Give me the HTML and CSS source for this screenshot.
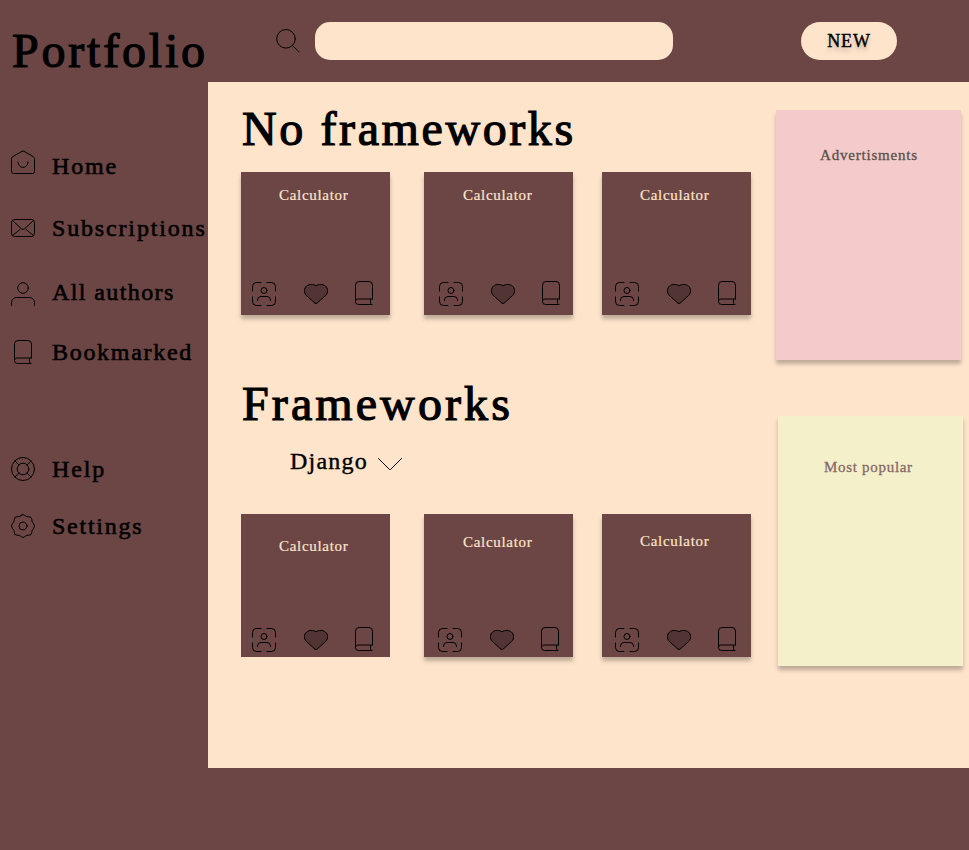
FILE: index.html
```html
<!DOCTYPE html>
<html lang="en">
<head>
<meta charset="utf-8">
<title>Portfolio</title>
<link rel="stylesheet" href="styles.css">
</head>
<body>
<svg class="defs" width="0" height="0">
  <symbol id="book" viewBox="0 0 24 24"><path d="M20.500 18V4a3.500 3.500 0 0 0-3.500-3.500h-10A3.500 3.500 0 0 0 3.500 4V20.500a3 3 0 0 0 3 3H20M3.500 20A2.200 2.200 0 0 1 5.700 18H20.500M18.500 18.500v2.500c0 1.300.5 1.800 1 2.500"/></symbol>
  <symbol id="scan" viewBox="0 0 24 24"><path d="M.5 9V4.500a4 4 0 0 1 4-4H9M15 .5h4.500a4 4 0 0 1 4 4V9M23.500 15v4.500a4 4 0 0 1-4 4H15M9 23.500H4.500a4 4 0 0 1-4-4V15M5.500 18.500V18a3.500 3.500 0 0 1 3.500-3.500h6a3.500 3.500 0 0 1 3.500 3.500v.5"/><circle cx="12" cy="8.500" r="3"/></symbol>
  <symbol id="heart" viewBox="0 0 24 24"><path class="fill" d="M10.900 22.100 2.400 14.500C-.5 11.500-.1 7.300 2.600 5 5 2.900 9.400 3 12 4.800 14.600 3 19 2.900 21.400 5c2.700 2.300 3.100 6.500.2 9.500l-8.500 7.600q-1.100.9-2.200 0z"/></symbol>
</svg>
<div class="app">
  <aside class="sidebar">
    <h1 class="title logo">Portfolio</h1>
    <nav class="nav">
      <a class="item home"><svg class="icon" viewBox="0 0 24 24"><path d="M.5 8.500a2 2 0 0 1 1-1.700L11 1.300q1-.5 2 0l9.500 5.500a2 2 0 0 1 1 1.700v13a2 2 0 0 1-2 2h-19a2 2 0 0 1-2-2zM7 12c0 7.300 10 7.300 10 0"/></svg><span>Home</span></a>
      <a class="item subs"><svg class="icon" viewBox="0 0 24 24"><rect x=".5" y="3.500" width="23" height="17" rx="3"/><path d="m1.500 4.500 9 8.300q1.500 1.300 3 0l9-8.300M1.500 19.500l7.500-6M22.500 19.500l-7.500-6"/></svg><span>Subscriptions</span></a>
      <a class="item authors"><svg class="icon" viewBox="0 0 24 24"><circle cx="12" cy="6" r="5.300"/><path d="M.5 23.500v-3a5 5 0 0 1 5-5h13a5 5 0 0 1 5 5v3"/></svg><span>All authors</span></a>
      <a class="item marks"><svg class="icon"><use href="#book"/></svg><span>Bookmarked</span></a>
      <a class="item help"><svg class="icon" viewBox="0 0 24 24"><circle cx="12" cy="12" r="11.500"/><circle cx="12" cy="12" r="5.800"/><path d="m4 4 4 4m8 8 4 4M20 4l-4 4m-8 8-4 4"/></svg><span>Help</span></a>
      <a class="item settings"><svg class="icon" viewBox="0 0 24 24"><circle cx="12" cy="12" r="4"/><path d="M10.300 1.300q1.700-1.600 3.400 0 1.700 1.900 4.200 1.500 2.900-.1 2.900 2.800-.2 2.200 1.900 4.200 1.600 2.200 0 4.400-2.100 2-1.900 4.200 0 2.900-2.900 2.800-2.500-.4-4.200 1.500-1.700 1.600-3.400 0-1.700-1.900-4.200-1.500-2.900.1-2.900-2.800.2-2.200-1.900-4.200-1.600-2.200 0-4.400 2.100-2 1.900-4.200 0-2.900 2.900-2.800 2.500.4 4.200-1.500z"/></svg><span>Settings</span></a>
    </nav>
  </aside>
  <div class="page">
    <header class="topbar">
      <svg class="icon search" viewBox="0 0 24 24"><circle cx="10" cy="9.800" r="9.300"/><path d="m16.500 16.500 6.500 6.500"/></svg>
      <input class="field" type="text" aria-label="Search">
      <button class="new" type="button">NEW</button>
    </header>
    <main class="content">
      <div class="projects">
        <h2 class="title plain">No frameworks</h2>
        <div class="cards">
          <article class="card"><h3>Calculator</h3><div class="actions"><svg class="icon"><use href="#scan"/></svg><svg class="icon"><use href="#heart"/></svg><svg class="icon"><use href="#book"/></svg></div></article>
          <article class="card second"><h3>Calculator</h3><div class="actions"><svg class="icon"><use href="#scan"/></svg><svg class="icon"><use href="#heart"/></svg><svg class="icon"><use href="#book"/></svg></div></article>
          <article class="card third"><h3>Calculator</h3><div class="actions"><svg class="icon"><use href="#scan"/></svg><svg class="icon"><use href="#heart"/></svg><svg class="icon"><use href="#book"/></svg></div></article>
        </div>
        <h2 class="title framed">Frameworks</h2>
        <div class="picker"><span>Django</span><svg class="icon" viewBox="0 0 24 24"><path d="m.5 6.500 11 11q.5.500 1 0l11-11"/></svg></div>
        <div class="cards low">
          <article class="card flat"><h3>Calculator</h3><div class="actions"><svg class="icon"><use href="#scan"/></svg><svg class="icon"><use href="#heart"/></svg><svg class="icon"><use href="#book"/></svg></div></article>
          <article class="card second"><h3>Calculator</h3><div class="actions"><svg class="icon"><use href="#scan"/></svg><svg class="icon"><use href="#heart"/></svg><svg class="icon"><use href="#book"/></svg></div></article>
          <article class="card third"><h3>Calculator</h3><div class="actions"><svg class="icon"><use href="#scan"/></svg><svg class="icon"><use href="#heart"/></svg><svg class="icon"><use href="#book"/></svg></div></article>
        </div>
      </div>
      <div class="panels">
        <section class="panel ads"><h3>Advertisments</h3></section>
        <section class="panel popular"><h3>Most popular</h3></section>
      </div>
    </main>
  </div>
</div>
</body>
</html>
```
FILE: styles.css
```css
* { box-sizing: border-box; margin: 0; padding: 0; }
body { height: 850px; overflow: hidden; background: #6c4644; color: #000; font-family: "Liberation Serif", serif; }
.defs { display: block; }
.app { display: grid; grid-template-columns: 208px 761px; height: 850px; }
.icon { display: block; flex: none; width: 24px; height: 24px; fill: none; stroke: #000; stroke-width: 1; stroke-linecap: round; stroke-linejoin: round; overflow: visible; }
.title { font-size: 48px; line-height: 48px; font-weight: 400; white-space: nowrap; -webkit-text-stroke: 1.2px #000; }
.logo { margin: 27px 0 0 12px; letter-spacing: 2.8px; }
.nav { padding: 75px 0 0 11px; }
.item { display: flex; gap: 17px; height: 28px; font-size: 24px; line-height: 24px; white-space: nowrap; -webkit-text-stroke: .6px #000; letter-spacing: 1.85px; }
.item span { margin-top: 4px; }
.subs { margin-top: 38px; letter-spacing: 1.84px; }
.subs span { margin-top: 0; }
.authors { margin-top: 38px; letter-spacing: 1.4px; }
.authors span { margin-top: -2px; }
.marks { margin-top: 30px; letter-spacing: 1.7px; }
.marks span { margin-top: 0; }
.help { margin-top: 89px; }
.help span { margin-top: 0; }
.settings { margin-top: 29px; letter-spacing: 1.75px; }
.settings span { margin-top: 0; }

.topbar { display: flex; height: 82px; padding: 22px 0 0 68px; }
.search { margin: 7px 0 0; }
.field { width: 358px; height: 38px; margin-left: 15px; border: 0; border-radius: 15px; background: #fee4cb; }
.new { width: 96px; height: 38px; margin-left: 128px; border: 0; border-radius: 19px; background: #fee4cb; color: #000; font: 18px "Liberation Serif", serif; letter-spacing: .8px; -webkit-text-stroke: .4px #000; text-shadow: 0 4px 4px rgba(0,0,0,.25); }

.content { display: flex; height: 686px; background: #fee4cb; }
.projects { width: 510px; margin-left: 33px; }
.plain { margin: 23px 0 0 1px; letter-spacing: 2.6px; }
.cards { display: flex; margin-top: 19px; }
.card { width: 149px; height: 143px; padding-top: 16px; background: #6c4644; box-shadow: 0 4px 4px rgba(0,0,0,.25); }
.card h3 { margin-left: 38px; height: 14px; font-size: 15px; line-height: 14px; font-weight: 400; color: #fee4cb; letter-spacing: .7px; -webkit-text-stroke: .2px #fee4cb; }
.actions { display: flex; margin: 79px 0 0 11px; }
.actions .icon:first-child { margin-top: 1px; }
.actions .icon:nth-child(2) { margin-left: 28px; }
.actions .icon:nth-child(3) { margin-left: 24px; }
#heart .fill { fill: rgba(0,0,0,.25); stroke-width: 1; }
.second { margin-left: 34px; }
.second h3 { margin-left: 39px; }
.second .actions { margin-left: 15px; }
.third { margin-left: 29px; }
.third .actions { margin-left: 13px; }
.framed { margin: 65px 0 0 1px; letter-spacing: 3.1px; }
.picker { display: flex; align-items: center; gap: 10px; height: 24px; margin: 21px 0 0 49px; font-size: 24px; line-height: 24px; letter-spacing: 1.2px; -webkit-text-stroke: .4px #000; }
.picker .icon { margin-top: 5px; }
.low { margin-top: 41px; }
.low .card { padding-top: 25px; }
.low .actions { margin-top: 74px; }
.low .second { padding-top: 21px; }
.low .second .actions { margin: 78px 0 0 14px; }
.low .third { padding-top: 20px; }
.low .third .actions { margin-top: 79px; }
.low .flat { box-shadow: none; }

.panels { margin-left: 25px; padding-top: 28px; }
.panel { width: 185px; height: 250px; box-shadow: 0 4px 4px rgba(0,0,0,.25); }
.panel h3 { font-size: 15px; line-height: 14px; font-weight: 400; letter-spacing: .8px; white-space: nowrap; }
.ads { padding: 38px 0 0 44px; background: #f4caca; color: #58514b; -webkit-text-stroke: .3px #58514b; }
.popular { margin: 56px 0 0 2px; padding: 44px 0 0 46px; background: #f4f0ca; color: #886868; -webkit-text-stroke: .3px #886868; }
.popular h3 { letter-spacing: .7px; }
```
